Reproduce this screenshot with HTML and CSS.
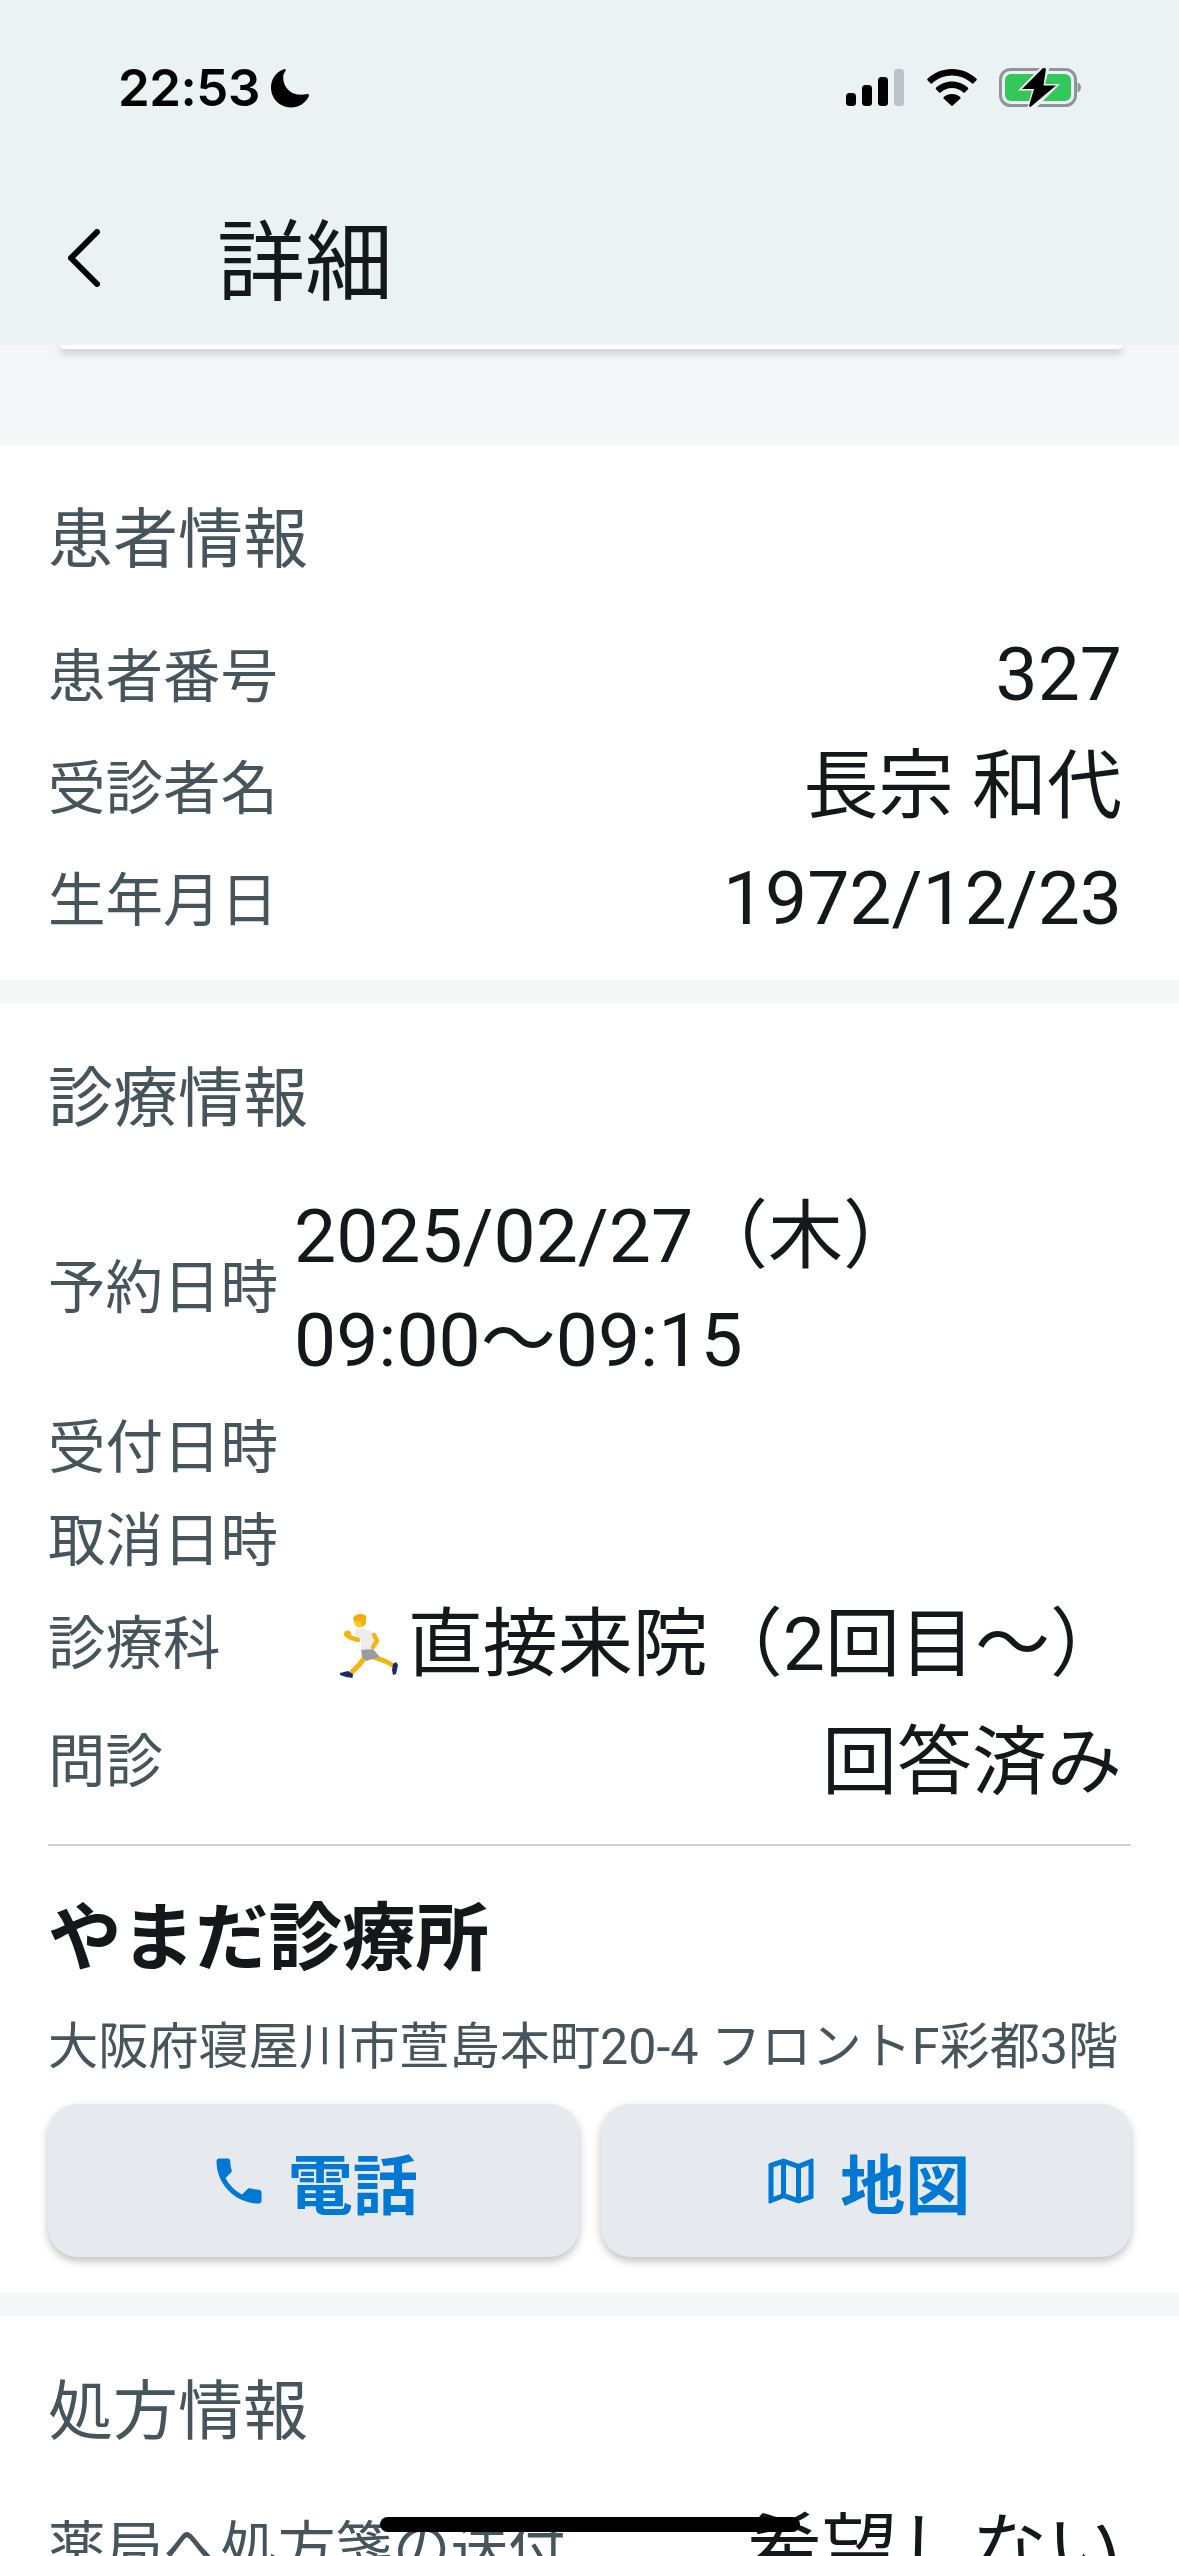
FILE: index.html
```html
<!DOCTYPE html>
<html lang="ja">
<head>
<meta charset="utf-8">
<title>詳細</title>
<link rel="stylesheet" href="styles.css">
</head>
<body>
<div class="screen">
  <header class="header">
    <div class="status">
      <div class="status-left">
        <span class="time">22:53</span>
        <svg class="moon" viewBox="0 0 40 40"><path fill="#000" d="M14 0.500C13.500 0.500 13 0.800 12.400 1.100C5 4 0 11 0 19.600C0 31 9 40 20.400 40C28.600 40 35.500 35.300 38.800 28.400C39.500 27 38.500 25.800 37 26.200C35 26.800 33 27 31 27C20 27 12.500 19.500 12.500 9C12.500 7 13 5 14.800 2.500C15.600 1.400 15.200 0.500 14 0.500Z"/></svg>
      </div>
      <div class="status-right">
        <svg class="signal" viewBox="0 0 58 37">
          <rect x="0" y="24" width="10" height="13" rx="3.500" fill="#000"/>
          <rect x="16" y="16" width="10" height="21" rx="3.500" fill="#000"/>
          <rect x="32" y="8" width="10" height="29" rx="3.500" fill="#000"/>
          <rect x="48" y="0" width="10" height="37" rx="3.500" fill="#bcc2c5"/>
        </svg>
        <svg class="wifi" viewBox="0 0 50 37">
          <path fill="#000" d="M25 0C15.500 0 7 3.700 0.500 9.700C0 10.200 0 10.800 0.500 11.300L3.500 14.300C4 14.800 4.700 14.800 5.200 14.300C10.500 9.500 17.500 6.600 25 6.600C32.500 6.600 39.500 9.500 44.800 14.300C45.300 14.800 46 14.800 46.500 14.300L49.500 11.300C50 10.800 50 10.200 49.500 9.700C43 3.700 34.500 0 25 0Z"/>
          <path fill="#000" d="M25 12.500C18.800 12.500 13.200 14.900 9 18.700C8.500 19.200 8.500 19.800 9 20.300L12 23.300C12.500 23.800 13.200 23.800 13.700 23.400C16.800 20.700 20.700 19.100 25 19.100C29.300 19.100 33.200 20.700 36.300 23.400C36.800 23.800 37.500 23.800 38 23.300L41 20.300C41.500 19.800 41.500 19.200 41 18.700C36.800 14.900 31.200 12.500 25 12.500Z"/>
          <path fill="#000" d="M25 25C21.800 25 18.900 26.200 16.800 28.100C16.300 28.600 16.300 29.200 16.800 29.700L24.200 36.600C24.700 37.100 25.300 37.100 25.800 36.600L33.200 29.700C33.700 29.200 33.700 28.600 33.200 28.100C31.100 26.200 28.200 25 25 25Z"/>
        </svg>
        <svg class="battery" viewBox="0 0 82 39">
          <rect x="1.500" y="1.500" width="75" height="36" rx="10" fill="none" stroke="#8f9597" stroke-width="3"/>
          <rect x="6" y="6" width="66" height="27" rx="6" fill="#34c759"/>
          <path d="M78.500 14.500C80.500 15.200 82 17 82 19.500C82 22 80.500 23.800 78.500 24.500Z" fill="#8f9597"/>
          <path fill="#ebf2f4" d="M43 -2L19 22.500L33 22.500L28 41L36 41L61 16L46 16L51 -2Z"/>
          <path fill="#000" d="M44 0L23 21H35L30 38L31.500 39L57 17.500H44.500L47 0.500Z"/>
        </svg>
      </div>
    </div>
    <div class="nav">
      <svg class="back" viewBox="0 0 32 58"><path fill="none" stroke="#000" stroke-width="6" stroke-linecap="round" stroke-linejoin="round" d="M29 3L3 29L29 55" /></svg>
      <h1 class="nav-title">詳細</h1>
    </div>
  </header>

  <main class="content">
    <div class="card-stub"></div>

    <section class="section first">
      <h2 class="section-title">患者情報</h2>
      <div class="row"><span class="label">患者番号</span><span class="value">327</span></div>
      <div class="row"><span class="label">受診者名</span><span class="value">長宗 和代</span></div>
      <div class="row"><span class="label">生年月日</span><span class="value">1972/12/23</span></div>
    </section>

    <section class="section">
      <h2 class="section-title">診療情報</h2>
      <div class="row start"><span class="label">予約日時</span><span class="value">2025/02/27（木）<br>09:00〜09:15</span></div>
      <div class="row"><span class="label">受付日時</span></div>
      <div class="row"><span class="label">取消日時</span></div>
      <div class="row tall">
        <span class="label">診療科</span>
        <span class="value visit">
          <svg class="runner" viewBox="0 0 58 64">
            <path fill="none" stroke="#f5b50f" stroke-width="5" stroke-linejoin="round" d="M25 43L20 50L11 59"/>
            <path fill="none" stroke="#f5b50f" stroke-width="4.500" stroke-linejoin="round" d="M33 43L45 47L54 52"/>
            <path fill="#9a9c9f" d="M21 35L33 35L40 43L26 47L22 43Z"/>
            <path fill="#ececed" d="M15 16C19 14 24 15 28 16L36 21L33 35L21 36L21 27L15 22Z"/>
            <path fill="none" stroke="#f5b50f" stroke-width="4.500" stroke-linecap="round" stroke-linejoin="round" d="M18 26L9 23L9 20"/>
            <circle cx="7.500" cy="20" r="3.500" fill="#f5b50f"/>
            <path fill="none" stroke="#f5b50f" stroke-width="4.500" stroke-linecap="round" stroke-linejoin="round" d="M34 21L37 27L33 33"/>
            <circle cx="20" cy="7.500" r="6" fill="#fbc81f"/>
            <path fill="#f2ac0a" d="M13 5C14 0 24 -2 26.500 3L25 10.500L22 12L21 7L14 7Z"/>
            <path fill="#1b2a6b" d="M0 59L8 57L13 60L12.500 64L6 63L0 61Z"/>
            <path fill="#1b2a6b" d="M53 50L56 48L58 51L56 60L53 61L52 56Z"/>
          </svg><span>直接来院（2回目〜）</span>
        </span>
      </div>
      <div class="row"><span class="label">問診</span><span class="value">回答済み</span></div>

      <hr class="divider">
      <h3 class="clinic">やまだ診療所</h3>
      <p class="address">大阪府寝屋川市萱島本町20-4 フロントF彩都3階</p>
      <div class="actions">
        <button class="action" type="button">
          <svg class="icon" viewBox="0 0 24 24"><path fill="#0078d4" d="M6.620 10.790c1.440 2.830 3.760 5.140 6.590 6.590l2.200-2.200c.270-.270.670-.360 1.020-.240 1.120.370 2.330.570 3.570.570.550 0 1 .450 1 1V20c0 .550-.450 1-1 1-9.390 0-17-7.610-17-17 0-.550.450-1 1-1h3.500c.550 0 1 .450 1 1 0 1.250.200 2.450.570 3.570.110.350.030.740-.250 1.020l-2.200 2.200z"/></svg>
          <span>電話</span>
        </button>
        <button class="action" type="button">
          <svg class="icon" viewBox="0 0 24 24"><path fill="#0078d4" d="M20.500 3l-.160.030L15 5.100 9 3 3.360 4.900c-.210.070-.360.250-.360.480V20.500c0 .280.220.500.500.500l.160-.030L9 18.900l6 2.100 5.640-1.900c.210-.070.360-.250.360-.480V3.500c0-.280-.220-.500-.500-.500zM10 5.470l4 1.400v11.660l-4-1.400V5.470zm-5 .990l3-1.010v11.700l-3 1.160V6.460zm14 11.080l-3 1.010V6.860l3-1.160v11.840z"/></svg>
          <span>地図</span>
        </button>
      </div>
    </section>

    <section class="section">
      <h2 class="section-title">処方情報</h2>
      <div class="row"><span class="label">薬局へ処方箋の送付</span><span class="value">希望しない</span></div>
    </section>
  </main>

  <div class="home-indicator"></div>
</div>
</body>
</html>
```
FILE: styles.css
```css
* { box-sizing: border-box; }
html, body { margin: 0; padding: 0; }
body {
  width: 1179px;
  height: 2556px;
  overflow: hidden;
  background: #f5f6f8;
  font-family: Roboto, "Noto Sans CJK JP", sans-serif;
  color: #14181b;
}
.screen { position: relative; width: 1179px; height: 2556px; overflow: hidden; background: #f5f6f8; }

.header { position: relative; z-index: 2; height: 345px; background: #ebf2f4; display: flex; flex-direction: column; }
.status { display: flex; justify-content: space-between; align-items: flex-start; padding: 68px 98px 0 118px; height: 178px; }
.status-left { display: flex; align-items: center; gap: 11px; height: 40px; }
.time { font-family: Inter, sans-serif; font-weight: 600; font-size: 51px; line-height: 40px; color: #000; letter-spacing: -0.5px; }
.moon { width: 39px; height: 40px; }
.status-right { display: flex; align-items: flex-start; height: 39px; }
.signal { width: 58px; height: 37px; margin-top: 1px; }
.wifi { width: 50px; height: 37px; margin: 1px 22px 0 23px; }
.battery { width: 82px; height: 39px; overflow: visible; }
.nav { display: flex; align-items: center; height: 167px; padding: 0 0 8px 68px; }
.back { width: 32px; height: 58px; }
.nav-title { margin: 10px 0 0 117px; font-size: 88px; font-weight: 400; line-height: 120px; color: #14181b; }

.content { display: flex; flex-direction: column; }
.card-stub {
  height: 4px; margin: 0 57px 0 60px; position: relative; z-index: 1; background: #fff;
  border-radius: 0 0 20px 20px; box-shadow: 0 3px 8px rgba(0,0,0,.35);
}
.section { background: #fff; padding: 51px 48px 0; margin-top: 23px; }
.section.first { margin-top: 96px; padding-top: 50px; height: 535px; }
.section-title { margin: 0 0 36px; font-size: 65px; font-weight: 400; line-height: 90px; color: #46545c; }

.row { display: flex; justify-content: space-between; align-items: center; padding: 4px 9px 4px 0; }
.row.start { justify-content: flex-start; gap: 16px; padding-bottom: 10px; }
.row.tall { padding-bottom: 10px; }
.label { font-size: 57.5px; line-height: 85px; color: #46545c; white-space: nowrap; }
.value { font-size: 75px; line-height: 104px; color: #14181b; white-space: nowrap; }
.first .value { margin: -3px 0 3px; }
.visit { display: flex; align-items: center; margin-right: -3px; }
.runner { width: 58px; height: 64px; margin-right: 10px; margin-top: 4px; }

.divider { border: 0; height: 2px; background: #cfd2d4; margin: 26px 0 0; }
.clinic { margin: 40px 0 0; font-size: 73.5px; font-weight: 700; line-height: 106px; color: #14181b; }
.address { margin: 19px 0 0; font-size: 50.2px; line-height: 72px; color: #46545c; white-space: nowrap; }
.actions { display: flex; gap: 22px; margin: 21px 0 36px; }
.action {
  flex: 1; height: 153px; border: 0; border-radius: 30px; background: #e6e9ed;
  box-shadow: 0 4px 8px rgba(0,0,0,.25);
  display: flex; align-items: center; justify-content: center; gap: 19px;
  font-family: inherit; font-size: 65px; font-weight: 700; color: #0078d4; padding: 0;
}
.icon { width: 60px; height: 60px; }

.home-indicator { position: absolute; left: 380px; top: 2517px; width: 420px; height: 15px; border-radius: 8px; background: #000; }
```
